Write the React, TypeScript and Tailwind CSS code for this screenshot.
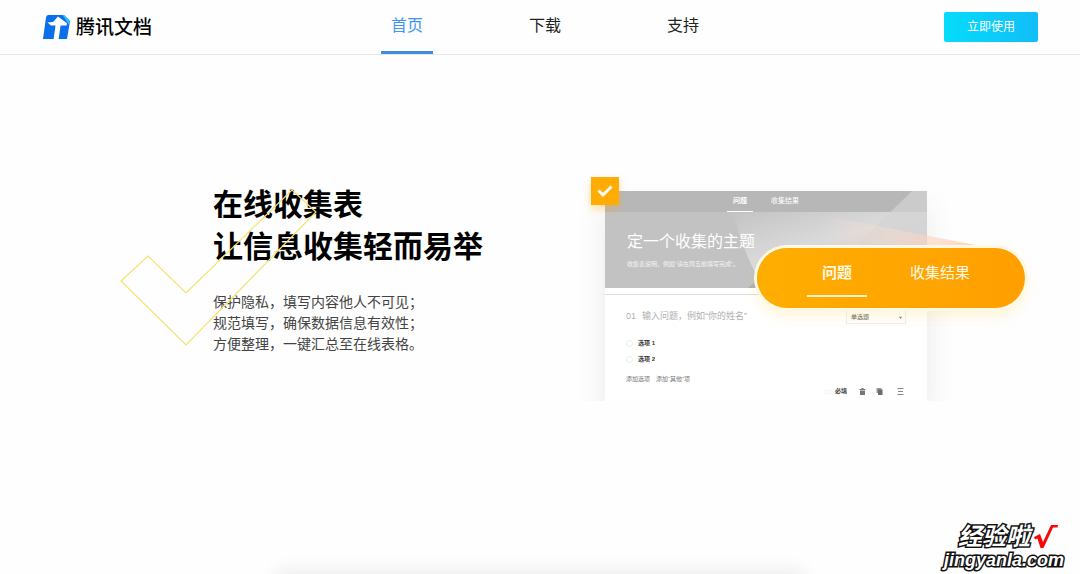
const NAV = [
  { label: "首页", active: true },
  { label: "下载", active: false },
  { label: "支持", active: false },
];

const FEATURES = [
  "保护隐私，填写内容他人不可见；",
  "规范填写，确保数据信息有效性；",
  "方便整理，一键汇总至在线表格。",
];

function Logo() {
  return (
    <a href="#" className="flex items-center gap-1.5">
      <svg className="h-[26px] w-7" viewBox="0 0 28 26" aria-hidden="true">
        <path d="M6 1h16l6 6-3 18H1L4 3.500Q4.400 1 6 1z" fill="#0a70ea" />
        <path d="M20.500 1H22l6 6-.8 4z" fill="#2fc0f8" />
        <path
          d="M5.500 8.500 11 8 16 2.500 25 9.200l-.4 2.300h-6L16.500 26H11.500l2-14.500H9z"
          fill="#fff"
        />
      </svg>
      <span className="pt-0.5 text-[19px] leading-7 font-medium text-black">
        腾讯文档
      </span>
    </a>
  );
}

function Header() {
  return (
    <header className="flex h-[55px] items-center justify-between border-b border-[#e8e8ea] px-[42px]">
      <Logo />
      <nav className="flex h-full gap-[86px] pr-1.5">
        {NAV.map(({ label, active }) => (
          <a
            key={label}
            href="#"
            className={
              active
                ? "w-[52px] border-b-3 border-[#3f8be0] pt-3 text-center text-base leading-7 text-[#3f93f5]"
                : "w-[52px] pt-3 text-center text-base leading-7 text-[#222]"
            }
          >
            {label}
          </a>
        ))}
      </nav>
      <button className="h-[30px] w-[94px] rounded-xs bg-linear-to-r from-[#05dcfa] to-[#12bdf8] text-xs text-white">
        立即使用
      </button>
    </header>
  );
}

function Intro() {
  return (
    <div className="relative">
      <h1 className="text-[30px] leading-[42px] font-bold text-black">
        在线收集表
        <br />
        让信息收集轻而易举
      </h1>
      <ul className="mt-6 text-sm leading-[21px] text-[#444]">
        {FEATURES.map((text) => (
          <li key={text}>{text}</li>
        ))}
      </ul>
      <svg
        className="absolute top-1 -left-24 h-40 w-[200px]"
        viewBox="0 0 200 160"
        aria-hidden="true"
      >
        <path
          d="M4 93 31 68 69 105 175 2 199 24 69 157z"
          fill="none"
          stroke="#f5e272"
          strokeWidth="1.200"
        />
      </svg>
    </div>
  );
}

function FormBanner() {
  return (
    <div className="relative h-[97px] bg-[#c3c2c3] text-white">
      <svg
        className="absolute inset-0 h-full w-full"
        viewBox="0 0 322 97"
        preserveAspectRatio="none"
        aria-hidden="true"
      >
        <defs>
          <linearGradient id="facet" x1="0" y1="0" x2="0.6" y2="0.8">
            <stop offset="0" stopColor="#c3c2c3" />
            <stop offset="0.6" stopColor="#dadadb" />
            <stop offset="1" stopColor="#cfcfd0" />
          </linearGradient>
        </defs>
        <path d="M128 18h194v79H160Q138 66 128 18z" fill="url(#facet)" />
        <path d="M143 97 149 92 160 97z" fill="#adadad" />
        <path d="M0 0h322v21H0z" fill="#b8b7b8" />
        <path d="M307 0h15v97H208z" fill="#d4d3d4" opacity="0.7" />
      </svg>
      <div className="relative flex h-[21px] gap-[18px] pl-[122px] text-[7px] leading-5">
        <span className="w-[26px] border-b border-white text-center font-bold">
          问题
        </span>
        <span>收集结果</span>
      </div>
      <div className="relative pt-[18px] pl-[22px]">
        <h2 className="text-base leading-6">定一个收集的主题</h2>
        <p className="mt-1 text-[6px] leading-3 text-white/80">
          收集表说明，例如“请在周五前填写完成”。
        </p>
      </div>
    </div>
  );
}

function FormBody() {
  return (
    <div className="mt-1.5 border-t border-[#dedcdd] px-[21px] pt-4">
      <div className="flex h-3 items-center justify-between text-[#b0b0b0]">
        <p className="flex gap-1.5 text-[9px]">
          <span>01</span>
          <span>输入问题，例如“你的姓名”</span>
        </p>
        <div className="relative">
          <select
            aria-label="题目类型"
            className="block h-3.5 w-[60px] appearance-none border border-[#eeeeee] pl-1 text-[6px] leading-3 text-[#555]"
          >
            <option>单选题</option>
          </select>
          <svg
            className="pointer-events-none absolute top-1.5 right-1 size-[3px]"
            viewBox="0 0 4 4"
          >
            <path d="M0 1h4L2 4z" fill="#777" />
          </svg>
        </div>
      </div>
      <div className="mt-3 text-[6px] leading-4 font-bold text-[#333]">
        {["选项 1", "选项 2"].map((option) => (
          <label key={option} className="flex items-center gap-[5px]">
            <input
              type="radio"
              name="option"
              className="size-[7px] appearance-none rounded-full border border-[#ececec]"
            />
            {option}
          </label>
        ))}
      </div>
      <p className="mt-1.5 flex gap-1.5 text-[6px] leading-3 text-[#777]">
        <span>添加选项</span>
        <span>添加“其他”项</span>
      </p>
      <div className="flex h-[13px] items-center justify-end pr-0.5">
        <label className="mr-3 flex items-center gap-1 text-[6px] font-bold text-[#444]">
          <input
            type="checkbox"
            className="h-1 w-[7px] appearance-none rounded-full border border-[#f3f3f3]"
          />
          必填
        </label>
        <svg className="mr-2.5 size-[7px]" viewBox="0 0 7 7" aria-hidden="true">
          <path d="M.5 1h2V0h2v1h2v1h-6zM1 2.500h5V7H1z" fill="#777" />
        </svg>
        <svg className="mr-3.5 size-[7px]" viewBox="0 0 7 7" aria-hidden="true">
          <path d="M.5 0h5v5h-5z" fill="#999" />
          <path d="M2 1.500h4.500V7H2z" fill="#6b6b6b" />
        </svg>
        <svg className="size-[7px]" viewBox="0 0 7 7" aria-hidden="true">
          <path d="M.5.500h6M1 3.500h5M.5 6.500h6" stroke="#888" fill="none" />
        </svg>
      </div>
    </div>
  );
}

function Preview() {
  return (
    <div className="relative w-[322px]">
      <div className="h-[210px] bg-white shadow-[0_18px_28px_rgba(80,60,80,0.1)] [clip-path:inset(-40px_-40px_0_-40px)]">
        <FormBanner />
        <FormBody />
      </div>

      <div className="absolute -top-3.5 -left-3.5 flex size-7 items-center justify-center bg-[#ffad05] shadow-[0_4px_8px_rgba(255,173,5,0.35)]">
        <svg className="h-3 w-4" viewBox="0 0 16 12" aria-hidden="true">
          <path
            d="M1.500 5.500 6 10 14.500 1.500"
            fill="none"
            stroke="#fff"
            strokeWidth="2.800"
          />
        </svg>
      </div>

      {/* beam from the small tabs to the enlarged ones */}
      <svg
        className="absolute top-5 left-[195px] h-[38px] w-[196px]"
        viewBox="0 0 196 38"
        aria-hidden="true"
      >
        <defs>
          <linearGradient id="beam" gradientUnits="userSpaceOnUse" x1="0" y1="0" x2="196" y2="0">
            <stop offset="0.1" stopColor="#ffe0d0" stopOpacity="0" />
            <stop offset="0.5" stopColor="#ffdccb" stopOpacity="0.45" />
            <stop offset="0.7" stopColor="#ffd0b8" stopOpacity="0.6" />
            <stop offset="1" stopColor="#ffb48c" stopOpacity="0.8" />
          </linearGradient>
        </defs>
        <path d="M0 0 196 38H0z" fill="url(#beam)" />
      </svg>

      <div className="absolute top-[57px] left-[152px] flex h-[60px] w-[268px] gap-[43px] rounded-full bg-linear-to-r from-[#ffae00] to-[#ff9f00] pl-[50px] text-[15px] leading-[50px] text-[#fff8e6] shadow-[0_0_0_3px_#fff8e3,0_8px_14px_rgba(255,215,90,0.25)]">
        <span className="h-[49px] w-[60px] border-b-2 border-[#fff3d0] text-center font-bold">
          问题
        </span>
        <span>收集结果</span>
      </div>
    </div>
  );
}

function Watermark() {
  return (
    <div className="absolute right-4 bottom-1 text-right font-bold text-white italic [paint-order:stroke] [-webkit-text-stroke:3px_#111]">
      <p className="flex items-center justify-end gap-1 pr-1.5 text-2xl leading-6">
        经验啦
        <svg className="h-[26px] w-6" viewBox="0 0 24 26" aria-hidden="true">
          <path
            d="M0 13 6 10 9 18 17 1h7l-.5 2.500h-4.500L9.500 24 6.500 24 3.500 14.500 1 15.500z"
            fill="#fb0508"
          />
        </svg>
      </p>
      <p className="text-lg leading-5">jingyanla.com</p>
    </div>
  );
}

export default function App() {
  return (
    <div className="relative flex min-h-screen flex-col overflow-hidden bg-[#fefefe] font-['Liberation_Sans','Noto_Sans_CJK_SC',sans-serif]">
      <Header />
      <main className="flex flex-1 items-start justify-between pt-[129px] pr-[153px] pl-[213px]">
        <Intro />
        <div className="pt-[7px]">
          <Preview />
        </div>
      </main>
      <div className="mx-auto h-0 w-[510px] shadow-[0_6px_18px_8px_rgba(70,50,60,0.11)]" />
      <Watermark />
    </div>
  );
}
